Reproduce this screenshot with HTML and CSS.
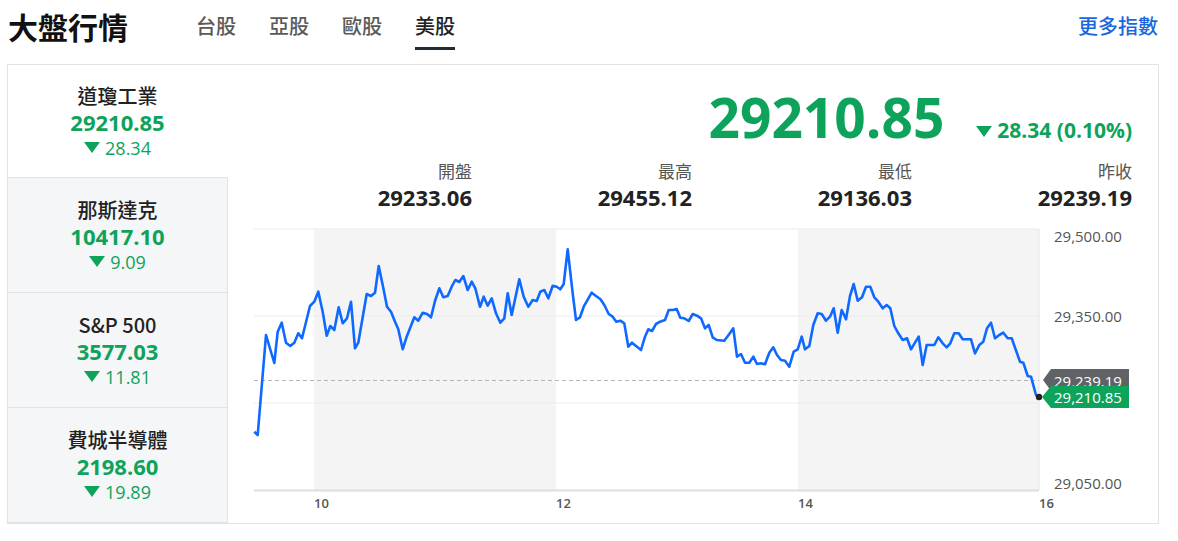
FILE: index.html
```html
<!DOCTYPE html>
<html lang="zh-Hant">
<head>
<meta charset="utf-8">
<title>大盤行情</title>
<link rel="stylesheet" href="styles.css">
</head>
<body>
<header class="top">
  <h1 class="title">大盤行情</h1>
  <nav class="tabs">
    <a class="tab">台股</a>
    <a class="tab">亞股</a>
    <a class="tab">歐股</a>
    <a class="tab active">美股</a>
  </nav>
  <a class="more">更多指數</a>
</header>
<section class="card">
  <ul class="list">
    <li class="item selected">
      <div class="name">道瓊工業</div>
      <div class="val">29210.85</div>
      <div class="chg"><span class="tri"></span>28.34</div>
    </li>
    <li class="item">
      <div class="name">那斯達克</div>
      <div class="val">10417.10</div>
      <div class="chg"><span class="tri"></span>9.09</div>
    </li>
    <li class="item">
      <div class="name">S&amp;P 500</div>
      <div class="val">3577.03</div>
      <div class="chg"><span class="tri"></span>11.81</div>
    </li>
    <li class="item">
      <div class="name">費城半導體</div>
      <div class="val">2198.60</div>
      <div class="chg"><span class="tri"></span>19.89</div>
    </li>
  </ul>
  <div class="main">
    <div class="quote">
      <span class="price">29210.85</span>
      <span class="change"><span class="tri"></span>28.34 (0.10%)</span>
    </div>
    <div class="stats">
      <div class="stat"><div class="lbl">開盤</div><div class="num">29233.06</div></div>
      <div class="stat"><div class="lbl">最高</div><div class="num">29455.12</div></div>
      <div class="stat"><div class="lbl">最低</div><div class="num">29136.03</div></div>
      <div class="stat"><div class="lbl">昨收</div><div class="num">29239.19</div></div>
    </div>
    <svg class="chart" width="930" height="302" viewBox="227 221 930 302">
      <rect x="313" y="229" width="242" height="261" class="shade"/>
      <rect x="797" y="229" width="241" height="261" class="shade"/>
      <line x1="253" y1="229" x2="1038" y2="229" class="grid"/>
      <line x1="253" y1="316" x2="1038" y2="316" class="grid"/>
      <line x1="253" y1="403" x2="1038" y2="403" class="grid"/>
      <line x1="1038" y1="229" x2="1038" y2="490" class="vaxis"/>
      <line x1="253" y1="490.5" x2="1038" y2="490.5" class="axis"/>
      <line x1="253" y1="380.5" x2="1038" y2="380.5" class="dash"/>
      <polyline class="line" points="253.3,431.7 256.7,435 265,335 273.3,363 276.7,331.7 280.7,322.7 285,342.7 289.3,346 293.3,342.7 297.3,333.3 301,338.3 309,306 313.3,301.7 317.3,291.7 321.7,311.7 325.7,335.7 329.3,326 333.3,330 337.7,307.3 341.7,323.3 346,318.3 350,301.7 354,348.3 357.3,342.7 365.7,294 370,296 374,292.7 377.7,266 381.7,285 386,306.7 390,311.7 394,321.7 397.3,329.3 401.7,349.3 405.7,336.7 413.3,317.3 417.3,320.7 421.7,312.7 426,314 430,317.3 434,301 438.3,288.3 442.3,297.3 446.7,296 450.7,286.7 454.3,280 458.3,282 462.3,276 466.7,290 470.7,281.7 474.3,288.3 479,306.7 482.7,296.7 486.7,305.7 490.7,298.3 495,313.3 499.3,322.7 503.3,318.3 506.7,293.3 510.7,315 518.3,279.3 522.7,296.7 527.3,306.7 531.7,300 535.7,301 539.3,291.7 543.3,290 547.3,298.3 551.7,285.7 555.7,286.7 559.3,289.3 562.7,284 566.7,249.3 571.7,293.3 575,320 579,317.3 582.7,306.7 590.7,292.7 595,296 599.3,299 603.3,305 607.7,314 611.7,316.7 615.3,321.7 619.3,320.7 623.3,323.3 627.3,346.7 631,342.7 636,346.7 640,350 644,336.7 647.3,329.3 651,331 655,324 659,321.7 664,320 667.7,310 671.7,310 675.7,309 679.3,317.7 683.3,318.3 687.7,321 691.7,314 696,315.7 700,318.3 704,328.3 707.7,325 711.7,337.3 715.7,340 723.3,340.7 728.3,334 732.3,328.3 736,356.7 740,354 744,362.7 748.3,362.7 752.3,356.7 756,364 760,363.3 764,364.3 768.3,352.7 772.3,347.3 776,355 780,360 784,360.7 788.3,366.7 792.7,351.7 796.7,349.3 800.7,336.7 804,349.3 808.3,346 812.3,325 816.7,313.3 820.7,314 825,320.7 829,316.7 832.7,308.3 836.7,332.7 840.7,310 845,319.3 849,296 852.7,284 856.7,300.7 861,297.3 865,286.7 869.3,286.7 873.3,297.3 877.3,301.7 881.7,308.3 885.7,305 889.3,308.3 893.3,326 897.3,333.3 901.7,340 906,338.3 910,349.3 914,342.7 917.7,336.7 921.7,365 925.7,345 933.3,345 937.3,337.3 941.7,343.3 945.7,347.3 949.3,343.3 953.3,333.3 957.7,333.3 961.7,339.3 970,339.3 974,353.3 978.3,345 982.3,341.7 986,328.3 990,322.7 994,338.3 998.3,335 1002.3,332.7 1006.7,338.3 1010.7,338.3 1019,361.7 1022.3,362.7 1026.7,376 1030,376.7 1035,395 1037.7,397.3"/>
      <circle cx="1038" cy="397" r="3.2" class="dot"/>
      <text x="1053" y="241.5" class="ylab">29,500.00</text>
      <text x="1053" y="321.5" class="ylab">29,350.00</text>
      <text x="1053" y="488.5" class="ylab">29,050.00</text>
      <path d="M1042,380 L1050,369 L1128,369 L1128,391 L1050,391 Z" class="tag-gray"/>
      <text x="1053" y="386.5" class="tagtxt">29,239.19</text>
      <path d="M1041,397 L1050,386 L1128,386 L1128,408 L1050,408 Z" class="tag-green"/>
      <text x="1053" y="402.5" class="tagtxt">29,210.85</text>
      <text x="313" y="508" class="xlab">10</text>
      <text x="555" y="508" class="xlab">12</text>
      <text x="797" y="508" class="xlab">14</text>
      <text x="1038" y="508" class="xlab">16</text>
    </svg>
  </div>
</section>
</body>
</html>
```
FILE: styles.css
```css
* { box-sizing: border-box; }
html, body { margin: 0; padding: 0; background: #fff; }
body {
  font-family: "Open Sans", "Noto Sans CJK TC", sans-serif;
  color: #222;
  width: 1178px;
}
.top {
  display: flex;
  align-items: flex-start;
  height: 64px;
  padding: 0 20px 0 8px;
}
.title {
  margin: 0;
  font-size: 30px;
  font-weight: 700;
  line-height: 52px;
  color: #111;
  font-family: "Noto Sans CJK TC", sans-serif;
  width: 188px;
}
.tabs { display: flex; gap: 33px; }
.tab {
  display: block;
  font-family: "Noto Sans CJK TC", sans-serif;
  font-size: 20px;
  font-weight: 500;
  line-height: 28px;
  padding-top: 12px;
  padding-bottom: 7px;
  border-bottom: 3px solid transparent;
  color: #5a5a5a;
}
.tab.active { color: #222; border-bottom-color: #232a31; }
.more {
  margin-left: auto;
  font-family: "Noto Sans CJK TC", sans-serif;
  font-size: 20px;
  font-weight: 500;
  line-height: 28px;
  padding-top: 12px;
  color: #1a68dc;
}
.card {
  margin-left: 7px;
  width: 1152px;
  height: 460px;
  border: 1px solid #e2e3e5;
  display: flex;
}
.list {
  list-style: none;
  margin: 0;
  padding: 0;
  width: 220px;
  flex: none;
  display: flex;
  flex-direction: column;
}
.item {
  height: 115px;
  flex: none;
  display: flex;
  flex-direction: column;
  align-items: center;
  justify-content: center;
  background: #f5f6f8;
  border-right: 1px solid #e2e3e5;
  border-bottom: 1px solid #e2e3e5;
}
.item.selected { background: #fff; border-right-color: transparent; height: 113px; }
.name {
  font-family: "Noto Sans CJK TC", sans-serif;
  font-size: 20px;
  font-weight: 500;
  line-height: 26px;
  color: #222;
}
.val {
  font-size: 22px;
  font-weight: 700;
  line-height: 27px;
  color: #0ea35b;
}
.chg {
  font-size: 18px;
  line-height: 24px;
  color: #0ea35b;
  display: flex;
  align-items: center;
}
.tri {
  display: inline-block;
  width: 0;
  height: 0;
  border-left: 8px solid transparent;
  border-right: 8px solid transparent;
  border-top: 11px solid #0ea35b;
  margin-right: 5px;
}
.main {
  flex: 1;
  display: flex;
  flex-direction: column;
}
.quote {
  display: flex;
  justify-content: flex-end;
  align-items: baseline;
  gap: 32px;
  padding: 22px 26px 0 0;
  height: 94px;
  flex: none;
}
.price {
  font-size: 55px;
  font-weight: 700;
  line-height: 60px;
  color: #0ea35b;
}
.change {
  font-size: 21px;
  font-weight: 700;
  color: #0ea35b;
}
.change .tri { vertical-align: 1px; }
.stats {
  display: grid;
  grid-template-columns: repeat(4, 220px);
  justify-content: end;
  padding-right: 26px;
  height: 62px;
  flex: none;
}
.stat { text-align: right; }
.lbl {
  font-family: "Noto Sans CJK TC", sans-serif;
  font-size: 17px;
  line-height: 24px;
  color: #555;
}
.num {
  font-size: 22px;
  font-weight: 700;
  line-height: 28px;
  color: #222;
}
.chart { display: block; }
.shade { fill: #f4f4f5; }
.grid { stroke: #ebebeb; stroke-width: 1; }
.vaxis { stroke: #e2e4e8; stroke-width: 1; }
.axis { stroke: #dcdee2; stroke-width: 2; }
.dash { stroke: #b5b5b5; stroke-width: 1; stroke-dasharray: 4 3; }
.line { fill: none; stroke: #0f69ff; stroke-width: 2.6; stroke-linejoin: round; }
.dot { fill: #222; }
.ylab { font-family: "Open Sans", sans-serif; font-size: 15px; fill: #555; }
.xlab { font-family: "Open Sans", sans-serif; font-size: 13px; font-weight: 600; fill: #555; }
.tag-gray { fill: #5f6368; }
.tag-green { fill: #0ea35b; }
.tagtxt { font-family: "Open Sans", sans-serif; font-size: 15px; fill: #fff; }
```
